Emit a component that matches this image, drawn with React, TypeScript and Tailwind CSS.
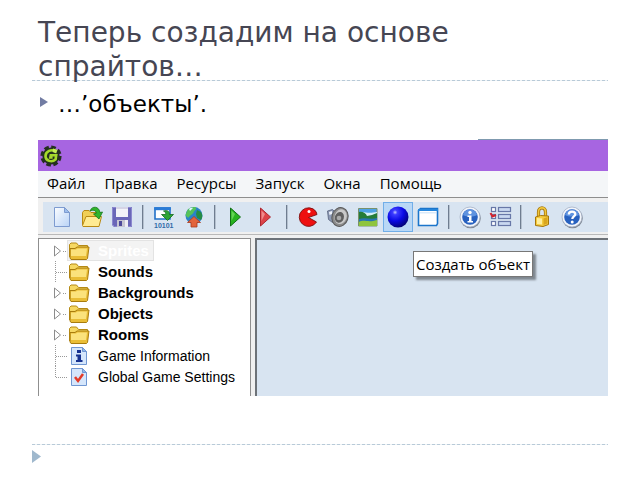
import type { ReactNode } from "react";
import clsx from "clsx";

const menuItems = ["Файл", "Правка", "Ресурсы", "Запуск", "Окна", "Помощь"];

function Icon({ children }: { children: ReactNode }) {
    return (
        <svg viewBox="0 0 24 24" className="h-6 w-6 shrink-0" aria-hidden="true">
            {children}
        </svg>
    );
}

function GearLogo() {
    return (
        <svg viewBox="0 0 24 24" className="h-6 w-6" aria-hidden="true">
            <circle cx="12" cy="12" r="8.6" fill="#24301f" />
            <circle cx="12" cy="12" r="8.6" fill="none" stroke="#24301f" strokeWidth="4" strokeDasharray="4.4 2.35" />
            <path d="M16.5 7.2C12.5 4.8 6.5 7.2 6.5 12.2c0 4.8 6.500 6.600 10.100 3.2l.6-4.2h-5.400l-.4 2.2h2.200" fill="none" stroke="#a4d92c" strokeWidth="2.600" />
            <path d="M14 4.5l4.5 1.2-1.3 3.8-3.6-1.6z" fill="#c4ee55" />
        </svg>
    );
}

function NewIcon() {
    return (
        <Icon>
            <defs>
                <linearGradient id="page" x1="0" y1="0" x2="1" y2="1">
                    <stop offset="0" stopColor="#fbfdff" />
                    <stop offset="1" stopColor="#b9d3f6" />
                </linearGradient>
            </defs>
            <path d="M4.5 2.5h10l5 5v14h-15z" fill="url(#page)" stroke="#7d9bd0" />
            <path d="M14.5 2.5v5h5z" fill="#9dbdec" stroke="#7d9bd0" />
        </Icon>
    );
}

function OpenIcon() {
    return (
        <Icon>
            <path d="M2.5 20V7.5l1.5-2h5l2 2h8V12" fill="#f0cf55" stroke="#b98a12" />
            <path d="M2.5 20.5l3.5-9h15.5l-2.5 10H3z" fill="#ffeb92" stroke="#b98a12" />
            <path d="M10 6c2-5.500 9-5 10 1.500l2.500-.5-3.500 7-5.500-5 2.800-.7C16 5 12.500 4.500 10 6z" fill="#2fb52b" stroke="#14741a" strokeWidth=".8" />
        </Icon>
    );
}

function SaveIcon() {
    return (
        <Icon>
            <path d="M2 2h20v20H4l-2-2z" fill="#6a67b8" />
            <path d="M2.500 2.500h19v19h-17l-2-2z" fill="none" stroke="#8b88cf" />
            <path d="M6 2h12v10H6z" fill="#f3f3f8" />
            <path d="M6 2h12v2H6z" fill="#d5d4e6" />
            <path d="M7 15h11v7H7z" fill="#c6c6d2" />
            <path d="M9 16h3v5H9z" fill="#4d4a9a" />
            <path d="M15 15h3v7h-3z" fill="#eeeef4" />
        </Icon>
    );
}

function ExecutableIcon() {
    return (
        <Icon>
            <path d="M3 3h15v11H3z" fill="#fff" stroke="#2170c8" strokeWidth="1.6" />
            <path d="M2.200 2.200h16.600v3H2.200z" fill="#2a7bd6" />
            <path d="M11.500 6c4-1 6 0 6 3.500h4L15.500 15.500 9.500 9.500h4C14 8 13.500 7 11.500 6z" fill="#2da436" stroke="#156b20" strokeWidth=".8" />
            <text x="2" y="22.500" className="font-['Liberation_Sans'] text-[7px] font-bold" fill="#2f6ba8">10101</text>
        </Icon>
    );
}

function GlobeIcon() {
    return (
        <Icon>
            <circle cx="12" cy="10.500" r="8.500" fill="#2b83c9" />
            <path d="M5 6c2-4 7-4.500 9-3.500 1 2-2 3-2.500 5S8 10 7 12 4 11 3.500 10z" fill="#55c25a" />
            <path d="M15 5l4 2c2 3 1.500 6 0 8l-4-2-1-4z" fill="#268c46" />
            <path d="M7 4c1-1 3-1.500 4-1l-3 3z" fill="#dff6ff" />
            <path d="M12 11.500l6.500 6H15v4.500H9v-4.500H5.500z" fill="#e2643c" stroke="#ab3b20" strokeWidth=".8" />
        </Icon>
    );
}

function RunIcon() {
    return (
        <Icon>
            <path d="M6.500 3l10 9-10 9z" fill="#27b31f" stroke="#117017" />
            <path d="M7.500 5.500L11 9l-3.500 7z" fill="#63d454" />
        </Icon>
    );
}

function DebugIcon() {
    return (
        <Icon>
            <path d="M6.500 3l10 9-10 9z" fill="#dc4348" stroke="#ad2730" />
            <path d="M7.500 5.500L11 9l-3.500 7z" fill="#f08b8b" />
        </Icon>
    );
}

function SpriteIcon() {
    return (
        <Icon>
            <path d="M20 6.500A9.300 9.300 0 1 0 20.500 17L12.500 12.500l8.500-3z" fill="#ee1010" stroke="#7c1010" strokeWidth=".9" />
            <circle cx="13" cy="6.500" r="1.500" fill="#fff" />
        </Icon>
    );
}

function SoundIcon() {
    return (
        <Icon>
            <path d="M1.500 6l5-1.500 4 4v6l-4 3-4-3z" fill="#8d9ab5" stroke="#55607a" strokeWidth=".8" />
            <path d="M3 7l3-1v3l-2.500 1z" fill="#eef2fa" />
            <ellipse cx="14" cy="12" rx="8" ry="9.500" fill="#8b8b8b" stroke="#5a5a5a" transform="rotate(18 14 12)" />
            <ellipse cx="14.500" cy="11.500" rx="6" ry="7.500" fill="#c9c9c9" transform="rotate(18 14 12)" />
            <ellipse cx="13.500" cy="12.500" rx="4.500" ry="5.500" fill="#606060" transform="rotate(18 14 12)" />
            <circle cx="13" cy="13" r="2.300" fill="#aaa" />
        </Icon>
    );
}

function BackgroundIcon() {
    return (
        <Icon>
            <path d="M2.500 3.500h18.500v17.500H2.500z" fill="#4ea3e6" stroke="#79916b" />
            <path d="M3 8c4-2 8 1 18-1v4H3z" fill="#d5f0f7" />
            <path d="M3 7c3-1 7 1 8 4l5-1 5-2v7H3z" fill="#247c39" />
            <path d="M3 14c6-2 12 1 18-1v4H3z" fill="#2774b4" />
            <path d="M3 17c5-3 9 1 18-2v6H3z" fill="#8fc53e" />
        </Icon>
    );
}

function ObjectIcon() {
    return (
        <Icon>
            <defs>
                <radialGradient id="ball" cx=".36" cy=".28" r=".75">
                    <stop offset="0" stopColor="#c4c8ff" />
                    <stop offset=".15" stopColor="#3c3cff" />
                    <stop offset=".55" stopColor="#0909e4" />
                    <stop offset="1" stopColor="#030374" />
                </radialGradient>
            </defs>
            <circle cx="12" cy="12" r="10.500" fill="url(#ball)" />
        </Icon>
    );
}

function RoomIcon() {
    return (
        <Icon>
            <path d="M2.500 5.500l2-2h17v15l-1 2h-18z" fill="#fff" stroke="#1b75cb" strokeWidth="1.600" />
            <path d="M2 4h20v2H2z" fill="#2686dc" />
            <path d="M4 7h16v1.500H4z" fill="#d9eafa" />
        </Icon>
    );
}

function RoundIcon({ children }: { children: ReactNode }) {
    return (
        <Icon>
            <circle cx="12.500" cy="13" r="10.300" fill="#7f8793" />
            <circle cx="12" cy="12" r="10" fill="#f2f5fa" stroke="#a7b3c6" strokeWidth=".8" />
            <circle cx="12" cy="12" r="7.800" fill="#2861bf" />
            <path d="M5 10a7.200 7.200 0 0 1 14 0c-4 2-10 2-14 0z" fill="#5f93e0" />
            {children}
        </Icon>
    );
}

function GameInfoIcon() {
    return (
        <RoundIcon>
            <circle cx="12" cy="7.500" r="1.700" fill="#fff" />
            <path d="M9.500 10.500h4v5.500h1.500v1.500H9.500V16H11v-4H9.500z" fill="#fff" />
        </RoundIcon>
    );
}

function HelpIcon() {
    return (
        <RoundIcon>
            <path d="M8.800 9.500c0-4 6.500-3.800 6.500-.3 0 2.200-3 2.300-3 4.800" fill="none" stroke="#fff" strokeWidth="2.300" />
            <circle cx="12.200" cy="17" r="1.500" fill="#fff" />
        </RoundIcon>
    );
}

function SettingsIcon() {
    return (
        <Icon>
            {[2, 9, 16].map((y) => (
                <g key={y} stroke="#6878a8" strokeWidth="1.200">
                    <rect x="3.500" y={y + 0.5} width="4" height="4" fill="#fff" />
                    <rect x="10.500" y={y + 0.5} width="12" height="4" fill="#c9d8f0" />
                </g>
            ))}
            <path d="M2.500 8l2 3.500L8 10" fill="none" stroke="#d3232d" strokeWidth="2" />
        </Icon>
    );
}

function LockIcon() {
    return (
        <Icon>
            <path d="M8.500 12V7c0-5.500 7-5.500 7 0v4" fill="none" stroke="#a5760c" strokeWidth="3.200" />
            <path d="M8.500 12V7c0-5.500 7-5.500 7 0v4" fill="none" stroke="#f0c63c" strokeWidth="1.600" />
            <path d="M5.500 12l5-1.500 8 .5v8.500l-5.500 2-7.500-1z" fill="#f5cb3c" stroke="#a5760c" />
            <path d="M7 13l5 .5v6L7 19z" fill="#ffee9c" />
            <path d="M13.500 13.500l4-1.500v6.500l-4 1.500z" fill="#d9a51d" />
        </Icon>
    );
}

const toolGroups = [
    [
        { label: "Новый", icon: <NewIcon /> },
        { label: "Открыть", icon: <OpenIcon /> },
        { label: "Сохранить", icon: <SaveIcon /> },
    ],
    [
        { label: "Создать приложение", icon: <ExecutableIcon /> },
        { label: "Опубликовать", icon: <GlobeIcon /> },
    ],
    [
        { label: "Запустить", icon: <RunIcon /> },
        { label: "Отладка", icon: <DebugIcon /> },
    ],
    [
        { label: "Создать спрайт", icon: <SpriteIcon /> },
        { label: "Создать звук", icon: <SoundIcon /> },
        { label: "Создать фон", icon: <BackgroundIcon /> },
        { label: "Создать объект", icon: <ObjectIcon />, active: true },
        { label: "Создать комнату", icon: <RoomIcon /> },
    ],
    [
        { label: "Информация об игре", icon: <GameInfoIcon /> },
        { label: "Настройки игры", icon: <SettingsIcon /> },
    ],
    [
        { label: "Режим", icon: <LockIcon /> },
        { label: "Справка", icon: <HelpIcon /> },
    ],
];

function Toolbar() {
    return (
        <div className="flex h-[30px] items-center bg-[#d8e4f1] pl-1">
            {toolGroups.map((group, index) => (
                <div key={index} className="flex items-center">
                    {index > 0 && (
                        <div className="flex w-3 justify-center">
                            <div className="h-6 w-0.5 border-l border-[#6f7d90] bg-[#b5c1cf]" />
                        </div>
                    )}
                    {group.map((tool) => (
                        <button
                            key={tool.label}
                            type="button"
                            aria-label={tool.label}
                            className={clsx(
                                "flex h-[30px] w-[30px] items-center justify-center",
                                "active" in tool && "border border-[#71aee8] bg-[#b9d8f6]",
                            )}
                        >
                            {tool.icon}
                        </button>
                    ))}
                </div>
            ))}
        </div>
    );
}

function FolderIcon() {
    return (
        <svg viewBox="0 0 22 20" className="h-5 w-[22px]" aria-hidden="true">
            <path d="M1.500 16V3.500L3 2h5.500l2 2.500h9V8" fill="#f6d862" stroke="#b58a16" />
            <path d="M2 17V7.500h5L9 6h12l-1.500 11.500-1 1H3z" fill="#e9bd36" stroke="#a87c0e" />
            <path d="M3 8.500h5L9.500 7.500H19L18 15H3z" fill="#fbe27c" />
        </svg>
    );
}

function PageIcon({ children }: { children: ReactNode }) {
    return (
        <svg viewBox="0 0 22 20" className="h-5 w-[22px]" aria-hidden="true">
            <path d="M3.500 1.500h11l4 4v13h-15z" fill="#d5e6fb" stroke="#6f96d2" />
            <path d="M14.500 1.500v4h4z" fill="#8fb5e8" stroke="#6f96d2" />
            {children}
        </svg>
    );
}

function InfoPageIcon() {
    return (
        <PageIcon>
            <path d="M9 4h4v3H9zM8 8.500h5V14h1.500v2H8v-2h1.500v-3.500H8z" fill="#16318f" />
        </PageIcon>
    );
}

function CheckPageIcon() {
    return (
        <PageIcon>
            <path d="M7 10l3 4 5-7" fill="none" stroke="#e23a28" strokeWidth="2.500" />
        </PageIcon>
    );
}

// The dotted line and, for a folder with content, the arrow that opens it
function Connector({ kind }: { kind: string }) {
    return (
        <svg viewBox="0 0 28 21" className="h-[21px] w-7 shrink-0" aria-hidden="true">
            {kind === "branch" ? (
                <>
                    <path d="M15.500 6v10l6-5z" fill="#fff" stroke="#8c8c8c" />
                    <path d="M24 11.500h4" stroke="#999" strokeDasharray="1 1" />
                </>
            ) : (
                <>
                    <path d={kind === "last" ? "M16.500 0v11" : "M16.500 0v21"} stroke="#999" strokeDasharray="1 1" />
                    <path d="M17 11.500h11" stroke="#999" strokeDasharray="1 1" />
                </>
            )}
        </svg>
    );
}

const resources = [
    { name: "Sprites", kind: "branch", icon: <FolderIcon />, selected: true },
    { name: "Sounds", kind: "leaf", icon: <FolderIcon /> },
    { name: "Backgrounds", kind: "branch", icon: <FolderIcon /> },
    { name: "Objects", kind: "branch", icon: <FolderIcon /> },
    { name: "Rooms", kind: "branch", icon: <FolderIcon /> },
    { name: "Game Information", kind: "leaf", icon: <InfoPageIcon />, plain: true },
    { name: "Global Game Settings", kind: "last", icon: <CheckPageIcon />, plain: true },
];

function ResourceTree() {
    return (
        <ul className="w-[213px] shrink-0 border-x border-t border-[#8f8f8f] bg-white pt-px font-['Liberation_Sans',sans-serif] text-sm">
            {resources.map((item) => (
                <li key={item.name} className="flex h-[21px] items-center">
                    <Connector kind={item.kind} />
                    <button
                        type="button"
                        className={clsx(
                            "flex h-[21px] items-center gap-2 border pr-1 whitespace-nowrap",
                            item.selected ? "border-[#e3e3e3] bg-[#f3f3f3] text-white" : "border-transparent text-black",
                            !item.plain && "text-[15px] font-bold",
                        )}
                    >
                        {item.icon}
                        {item.name}
                    </button>
                </li>
            ))}
        </ul>
    );
}

function GameMakerWindow() {
    return (
        <section className="ml-1.5 font-['Open_Sans',sans-serif] text-black">
            <div className="flex justify-end">
                <div className="h-px w-[130px] bg-[#7f9aaf]" />
            </div>
            <div className="flex h-[31px] items-center bg-[#a765e1] pl-px">
                <GearLogo />
            </div>
            <nav className="flex h-[26px] items-center gap-[19px] bg-[#f4f6f8] pb-0.5 pl-[9px] text-[15px]">
                {menuItems.map((item) => (
                    <button key={item} type="button">
                        {item}
                    </button>
                ))}
            </nav>
            <div className="border-t border-[#8e8e8e] bg-[#f0f0f0] pt-1 pl-[5px]">
                <Toolbar />
            </div>
            <div className="h-1.5 border-b border-[#f0f0f0] bg-[#f0f0f0] pt-0.5">
                <div className="h-px bg-[#b9b9b9]" />
            </div>
            <div className="flex h-[158px] bg-[#f0f0f0]">
                <ResourceTree />
                <div className="ml-1 flex-1 border-t-2 border-l-2 border-[#6d7278] bg-[#d8e4f1] pt-[11px] pl-[156px]">
                    <div role="tooltip" className="w-fit border border-[#777] bg-white px-0.5 text-[15px] leading-6 whitespace-nowrap shadow-[3px_3px_2px_#7f8790]">
                        Создать объект
                    </div>
                </div>
            </div>
        </section>
    );
}

function DashedRule() {
    return <div className="h-px bg-[repeating-linear-gradient(90deg,#b8cad8_0_3px,#edf2f5_3px_5px)]" />;
}

export default function App() {
    return (
        <main className="min-h-screen bg-white px-8 pt-4 font-['DejaVu_Sans',sans-serif]">
            <h1 className="h-16 max-w-[480px] pl-1.5 text-[28px] leading-[34px] text-[#464653]">
                Теперь создадим на основе спрайтов…
            </h1>
            <DashedRule />
            <ul className="mb-3 pt-2">
                <li className="flex h-[38px] pl-2 text-[23px] leading-[30px] text-black">
                    <svg viewBox="0 0 8 10" className="mt-2 mr-2.5 h-2.5 w-2" aria-hidden="true">
                        <path d="M0 0l8 5-8 5z" fill="#727ca3" />
                    </svg>
                    …’объекты’.
                </li>
            </ul>
            <GameMakerWindow />
            <footer className="pt-12">
                <DashedRule />
                <svg viewBox="0 0 9 13" className="mt-[5px] h-[13px] w-[9px]" aria-hidden="true">
                    <path d="M0 0l9 6.500L0 13z" fill="#9fb8cd" />
                </svg>
            </footer>
        </main>
    );
}
